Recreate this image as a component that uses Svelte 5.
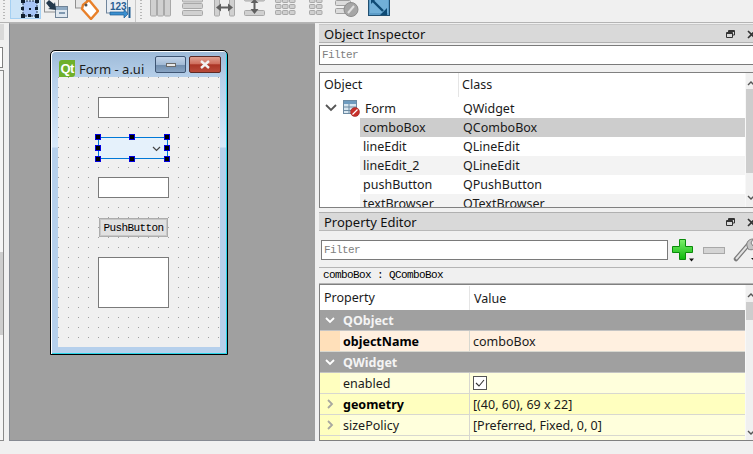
<script>
  const treeRows = [
    { name: 'comboBox', cls: 'QComboBox', kind: 'selected' },
    { name: 'lineEdit', cls: 'QLineEdit', kind: '' },
    { name: 'lineEdit_2', cls: 'QLineEdit', kind: 'alt' },
    { name: 'pushButton', cls: 'QPushButton', kind: '' },
    { name: 'textBrowser', cls: 'QTextBrowser', kind: 'alt' }
  ];
  const handleSpots = ['tl', 'tc', 'tr', 'ml', 'mr', 'bl', 'bc', 'br'];
  const threeCols = [0, 7, 14];
  const gridRows = [0, 6, 12];
</script>

<div class="app">
  <header class="toolbar">
    <span class="grip first"></span>
    <div class="active-tool">
      <svg width="31" height="19" viewBox="0 0 31 19">
        <rect x="13" y="1" width="14" height="15" fill="#a8c6f6" stroke="#26364f" stroke-dasharray="2 1"/>
        <g fill="#10202f">
          <rect x="11" y="-1" width="4" height="4"/><rect x="25" y="-1" width="4" height="4"/>
          <rect x="11" y="7" width="3" height="3"/><rect x="25" y="7" width="3" height="3"/>
          <rect x="11" y="14" width="4" height="4"/><rect x="18" y="14" width="3" height="3"/><rect x="25" y="14" width="4" height="4"/>
          <rect x="19" y="8" width="2" height="2"/>
        </g>
      </svg>
    </div>
    <svg class="tool t2" width="25" height="19" viewBox="0 0 25 19">
      <rect x="0.5" y="-3" width="14" height="15" fill="#efefef" stroke="#8f8f8f"/>
      <rect x="11.5" y="6.5" width="12" height="11" fill="#dfe7ef" stroke="#6f8397"/>
      <rect x="12" y="7" width="11" height="3" fill="#8eaac4"/>
      <rect x="15" y="12" width="6" height="2" fill="#7f98b0"/>
      <path d="M5 0l5 4 1-2 1 8-8-1 2-1-4-5z" fill="#23384c"/>
    </svg>
    <svg class="tool t3" width="24" height="20" viewBox="0 0 24 20">
      <rect x="0.5" y="-3" width="11" height="11" fill="#e6e6e6" stroke="#8f8f8f"/>
      <path d="M8 5l6-5 9 11-7 8L7 9z" fill="#fff" stroke="#e8802a" stroke-width="2.4"/>
      <circle cx="11" cy="5" r="1.5" fill="#555"/>
    </svg>
    <svg class="tool t4" width="25" height="20" viewBox="0 0 25 20">
      <rect x="0.5" y="-3" width="21" height="16" fill="#e8edf3" stroke="#70859c"/>
      <text x="4" y="10" class="num">123</text>
      <path d="M4 12h14v-3l4 5-4 4v-3H4z" fill="#3a8fd0" stroke="#1c5c94" stroke-width="0.7"/>
      <rect x="22.500" y="7" width="2" height="11" fill="#1c5c94"/>
    </svg>
    <span class="sep"></span>
    <span class="grip"></span>
    <svg class="tool t5" width="22" height="17" viewBox="0 0 22 17">
      {#each threeCols as x}
        <rect x={x + 0.5} y="-3" width="6" height="19" rx="1" fill="#d0d0d0" stroke="#a8a8a8"/>
      {/each}
    </svg>
    <svg class="tool t6" width="21" height="17" viewBox="0 0 21 17">
      <rect x="0.5" y="-4" width="20" height="6" rx="1" fill="#d0d0d0" stroke="#a8a8a8"/>
      <rect x="0.5" y="3.5" width="20" height="5" rx="1" fill="#d0d0d0" stroke="#a8a8a8"/>
      <rect x="0.5" y="10.5" width="20" height="5" rx="1" fill="#d0d0d0" stroke="#a8a8a8"/>
    </svg>
    <svg class="tool t7" width="21" height="17" viewBox="0 0 21 17">
      <rect x="0.5" y="-3" width="5" height="19" rx="1" fill="#d0d0d0" stroke="#a8a8a8"/>
      <rect x="15.5" y="-3" width="5" height="19" rx="1" fill="#d0d0d0" stroke="#a8a8a8"/>
      <path d="M2 7.5l5-4v3h7v-3l5 4-5 4v-3H7v3z" fill="#606060"/>
    </svg>
    <svg class="tool t8" width="21" height="17" viewBox="0 0 21 17">
      <rect x="0.5" y="-4" width="20" height="5" rx="1" fill="#d0d0d0" stroke="#a8a8a8"/>
      <rect x="0.5" y="10.5" width="20" height="5" rx="1" fill="#d0d0d0" stroke="#a8a8a8"/>
      <path d="M10.500 -1l4 4h-3v6h3l-4 5-4-5h3V3h-3z" fill="#606060"/>
    </svg>
    <svg class="tool t9" width="21" height="17" viewBox="0 0 21 17">
      {#each gridRows as y}
        {#each threeCols as x}
          <rect x={x + 0.5} y={y - 1.5} width="5.5" height="4" rx="0.7" fill="#d0d0d0" stroke="#a8a8a8"/>
        {/each}
      {/each}
    </svg>
    <svg class="tool t10" width="14" height="17" viewBox="0 0 14 17">
      {#each gridRows as y}
        {#each [0, 7] as x}
          <rect x={x + 0.5} y={y - 1.5} width="5.5" height="4" rx="0.7" fill="#d0d0d0" stroke="#a8a8a8"/>
        {/each}
      {/each}
    </svg>
    <svg class="tool t11" width="24" height="17" viewBox="0 0 24 17">
      <rect x="0.5" y="0.5" width="15" height="5" rx="1" fill="#dcdcdc" stroke="#a0a0a0"/>
      <rect x="0.5" y="8.5" width="15" height="5" rx="1" fill="#dcdcdc" stroke="#a0a0a0"/>
      <circle cx="16" cy="9.5" r="7" fill="#a6a6a6" stroke="#8c8c8c"/>
      <path d="M13 13l6-7" stroke="#e0e0e0" stroke-width="2"/>
    </svg>
    <svg class="tool t12" width="22" height="17" viewBox="0 0 22 17">
      <rect x="0.5" y="-3" width="21" height="18.5" fill="#5c9cc8" stroke="#214f70"/>
      <rect x="2" y="-2" width="18" height="15" fill="#72b0d8"/>
      <path d="M5 1l10 10" stroke="#0e4a74" stroke-width="2.4"/>
      <path d="M3 -2h6l-6 6zM19 15h-7l7-7z" fill="#0e4a74"/>
    </svg>
  </header>

  <div class="main">
    <aside class="leftdock">
      <div class="lhead"></div>
      <div class="lfilter"></div>
      <div class="llist"><div class="lthumb"></div></div>
    </aside>

    <section class="canvas">
      <div class="window">
        <div class="titlebar">
          <div class="qt">Qt</div>
          <div class="wtitle">Form - a.ui</div>
          <div class="wbtn min"><span></span></div>
          <div class="wbtn close">
            <svg width="12" height="9" viewBox="0 0 12 9"><path d="M2 1l8 7M10 1L2 8" stroke="#f2f2f2" stroke-width="2.4"/></svg>
          </div>
        </div>
        <div class="client">
          <div class="lineedit first-edit"></div>
          <div class="combo">
            <svg class="comboarrow" width="9" height="6" viewBox="0 0 9 6"><path d="M1 1l3.5 3.5L8 1" fill="none" stroke="#444" stroke-width="1.2"/></svg>
            {#each handleSpots as s}<i class="handle {s}"></i>{/each}
          </div>
          <div class="lineedit second-edit"></div>
          <div class="pushbutton">PushButton</div>
          <div class="browser"></div>
        </div>
      </div>
    </section>

    <aside class="rightdock">
      <div class="dockhead first-head">
        <span>Object Inspector</span>
        <svg class="float" width="9" height="8" viewBox="0 0 9 8"><path d="M2.500 2V.5h6v4.500H6.500M.5 2.500h6v5h-6zM.5 3.500h6M3 1.500h5" fill="none" stroke="#333"/></svg>
        <svg class="x" width="9" height="9" viewBox="0 0 9 9"><path d="M1 1l7 7M8 1L1 8" stroke="#333" stroke-width="1.6"/></svg>
      </div>
      <div class="filter wide">Filter</div>

      <div class="tree">
        <div class="treebody">
          <div class="thead"><span class="tc1">Object</span><span class="tc2">Class</span></div>
          <div class="troot">
            <svg class="tchev" width="12" height="8" viewBox="0 0 12 8"><path d="M1 1l5 5 5-5" fill="none" stroke="#555" stroke-width="1.8"/></svg>
            <svg class="ticon" width="17" height="17" viewBox="0 0 17 17">
              <rect x="0.5" y="0.5" width="13" height="13" fill="#d8e6f0" stroke="#6d8ba3"/>
              <rect x="1" y="1" width="12" height="3" fill="#6f9cc0"/>
              <path d="M1 7h12M1 10.5h12M6 4v9" stroke="#6d8ba3"/>
              <circle cx="12" cy="12" r="4.5" fill="#c8302a" stroke="#8c1d1a" stroke-width="0.5"/>
              <path d="M9.5 14.5l5-5" stroke="#fff" stroke-width="1.2"/>
            </svg>
            <span class="formname">Form</span>
            <span class="rootcls">QWidget</span>
          </div>
          {#each treeRows as r}
            <div class="trow {r.kind}"><span class="rn">{r.name}</span><span class="rc">{r.cls}</span></div>
          {/each}
        </div>
        <div class="scroll s1">
          <svg class="up" width="8" height="6" viewBox="0 0 8 6"><path d="M1 5l3-3 3 3" fill="none" stroke="#555" stroke-width="1.4"/></svg>
          <div class="thumb t-a"></div>
          <svg class="down" width="8" height="6" viewBox="0 0 8 6"><path d="M1 1l3 3 3-3" fill="none" stroke="#555" stroke-width="1.4"/></svg>
        </div>
      </div>

      <div class="dockhead second-head">
        <span>Property Editor</span>
        <svg class="float" width="9" height="8" viewBox="0 0 9 8"><path d="M2.500 2V.5h6v4.500H6.500M.5 2.500h6v5h-6zM.5 3.500h6M3 1.500h5" fill="none" stroke="#333"/></svg>
        <svg class="x" width="9" height="9" viewBox="0 0 9 9"><path d="M1 1l7 7M8 1L1 8" stroke="#333" stroke-width="1.6"/></svg>
      </div>

      <div class="peditbar">
        <div class="filter short">Filter</div>
        <svg class="plus" width="24" height="24" viewBox="0 0 24 24">
          <defs>
            <linearGradient id="pg" x1="0" y1="0" x2="0" y2="1"><stop offset="0" stop-color="#7df06a"/><stop offset="1" stop-color="#0cb80c"/></linearGradient>
          </defs>
          <path d="M8.500 1.500h6v7h7v6h-7v7h-6v-7h-7v-6h7z" fill="url(#pg)" stroke="#0a8a0a"/>
          <path d="M18 20.500h5l-2.500 3z" fill="#111"/>
        </svg>
        <svg class="minus" width="22" height="7" viewBox="0 0 22 7"><rect x="0.5" y="0.500" width="21" height="6" fill="#d4d4d4" stroke="#a8a8a8"/></svg>
        <svg class="wrench" width="21" height="24" viewBox="0 0 21 24">
          <path d="M3 21L15 7" stroke="#7a7a7a" stroke-width="4.500" stroke-linecap="round"/>
          <path d="M3 21L15 7" stroke="#e2e2e2" stroke-width="2"/>
          <path d="M14 8c-1-4 2-7 6-7l-2 4 2 3 3-1c0 4-4 6-8 4z" fill="#c4c4c4" stroke="#808080"/>
          <path d="M18 20h3v2h-1z" fill="#111"/>
        </svg>
      </div>

      <div class="classlabel">comboBox : QComboBox</div>

      <div class="ptable">
        <div class="pbody">
          <div class="phead"><span class="pc1">Property</span><span class="pc2">Value</span></div>

          <div class="group">
            <svg width="10" height="7" viewBox="0 0 10 7"><path d="M1 1l4 4 4-4" fill="none" stroke="#fff" stroke-width="1.800"/></svg>
            <span>QObject</span>
          </div>
          <div class="prow orange">
            <span class="stripe"></span><b class="pname">objectName</b><span class="pval">comboBox</span>
          </div>
          <div class="group">
            <svg width="10" height="7" viewBox="0 0 10 7"><path d="M1 1l4 4 4-4" fill="none" stroke="#fff" stroke-width="1.800"/></svg>
            <span>QWidget</span>
          </div>
          <div class="prow yellow">
            <span class="stripe"></span><span class="pname">enabled</span>
            <span class="pval"><svg class="check" width="14" height="14" viewBox="0 0 14 14"><rect x="0.500" y="0.500" width="13" height="13" fill="#fff" stroke="#555"/><path d="M3 7l3 3 5-6" fill="none" stroke="#333" stroke-width="1.100"/></svg></span>
          </div>
          <div class="prow deep">
            <span class="stripe"><svg width="7" height="10" viewBox="0 0 7 10"><path d="M1 1l4 4-4 4" fill="none" stroke="#a8a8a0" stroke-width="1.800"/></svg></span><b class="pname">geometry</b><span class="pval">[(40, 60), 69 x 22]</span>
          </div>
          <div class="prow yellow">
            <span class="stripe"><svg width="7" height="10" viewBox="0 0 7 10"><path d="M1 1l4 4-4 4" fill="none" stroke="#a8a8a0" stroke-width="1.800"/></svg></span><span class="pname">sizePolicy</span><span class="pval">[Preferred, Fixed, 0, 0]</span>
          </div>
          <div class="prow yellow tail"><span class="stripe"></span><span class="pname"></span><span class="pval"></span></div>
        </div>
        <div class="scroll s2">
          <svg class="up" width="8" height="6" viewBox="0 0 8 6"><path d="M1 5l3-3 3 3" fill="none" stroke="#555" stroke-width="1.4"/></svg>
          <div class="thumb t-b"></div>
          <svg class="down" width="8" height="6" viewBox="0 0 8 6"><path d="M1 1l3 3 3-3" fill="none" stroke="#555" stroke-width="1.4"/></svg>
        </div>
      </div>
    </aside>
  </div>
</div>

<style>
  :global(body) { margin: 0; background: #f0f0f0; }
  .app {
    width: 753px; height: 454px; overflow: hidden; background: #f0f0f0;
    font-family: "Noto Sans", "Open Sans", sans-serif; font-size: 12.500px; color: #1a1a1a;
  }
  /* toolbar */
  .toolbar {
    height: 22px; display: flex; align-items: flex-start; position: relative;
    border-bottom: 1px solid #b4b4b4; box-sizing: content-box; overflow: hidden;
  }
  .toolbar svg { display: block; flex: none; overflow: hidden; }
  .grip {
    width: 2px; height: 20px; flex: none; margin-left: 3px;
    background-image: repeating-linear-gradient(#b8b8b8 0 1px, transparent 1px 3px);
  }
  .grip.first { margin-right: 5px; }
  .active-tool {
    width: 31px; height: 19px; box-sizing: border-box; flex: none;
    background: #cce4f7; border: 1px solid #a5d0f2; border-top: 0;
    overflow: hidden;
  }
  .active-tool svg { margin: 0 0 0 -1px; }
  .t2 { margin-left: 3px; }
  .t3 { margin-left: 6px; }
  .t4 { margin-left: 7px; }
  .sep { width: 1px; height: 22px; background: #c8c8c8; margin-left: 4px; flex: none; }
  .grip:not(.first) { margin-left: 4px; }
  .t5 { margin-left: 8px; }
  .t6 { margin-left: 10px; }
  .t7 { margin-left: 11px; }
  .t8 { margin-left: 9px; }
  .t9 { margin-left: 10px; }
  .t10 { margin-left: 13px; }
  .t11 { margin-left: 12px; }
  .t12 { margin-left: 9px; }
  .tool text.num { font: bold 10px "Liberation Sans", sans-serif; fill: #2b5f93; }

  .main { display: flex; height: 418px; }
  /* left dock */
  .leftdock { width: 9px; flex: none; padding-top: 1px; box-sizing: border-box; }
  .lhead { height: 16px; width: 4px; background: #d9d9d9; }
  .lfilter { margin-top: 7px; height: 19px; width: 2px; background: #fff; border: 1px solid #808080; border-left: 0; }
  .llist {
    margin-top: 2px; height: 371px; width: 4px; background: #f5f5f5;
    border: 1px solid #8a8a8a; border-left: 0; padding-top: 181px; box-sizing: border-box;
  }
  .lthumb { height: 83px; background: #cdcdcd; width: 3px; }

  /* canvas */
  .canvas {
    width: 306px; height: 418px; flex: none; box-sizing: border-box;
    background: #a0a0a0; border-left: 1px solid #868a92; border-bottom: 1px solid #868a92;
    padding: 26px 0 0 40px; border-top: 1px solid #b0b0b0;
  }
  .window {
    width: 178px; height: 305px; box-sizing: border-box;
    border: 1px solid #000; border-radius: 5px 5px 0 0;
    box-shadow: inset 1px 1px 0 #fff, inset -1px -1px 0 #28d4e8;
    background: linear-gradient(#9dbad8 0, #b6cfe9 26px, #d8e9fa 96px, #b6d0ec 97px);
    padding: 0 7px 7px;
  }
  .titlebar { height: 26px; display: flex; align-items: flex-start; }
  .qt {
    width: 16px; height: 17px; margin-top: 9px; background: #6fb02b; color: #fff;
    font: bold 13px/17px "Liberation Sans", sans-serif; text-align: center; letter-spacing: -0.800px;
    flex: none; margin-left: 1px; box-sizing: border-box; border-radius: 3px 0 3px 0; white-space: nowrap;
  }
  .wtitle { margin: 7px 0 0 4px; font-size: 13px; line-height: 22px; color: #1d1d1d; width: 76px; flex: none; }
  .wbtn {
    width: 31px; height: 17px; margin-top: 5px; box-sizing: border-box; flex: none;
    border: 1px solid #3f5674; border-radius: 2px;
    display: flex; align-items: center; justify-content: center;
  }
  .min { background: linear-gradient(#c3d5ea 0, #a3bbd6 50%, #6f8cad 51%, #89a5c4 100%); }
  .min span { width: 10px; height: 4px; background: #e8e8e8; border: 1px solid #6a6a6a; box-sizing: border-box; margin-top: 1px; }
  .close { margin-left: 3px; width: 32px; border-color: #5e2a25; background: linear-gradient(#e0a090 0, #cf6f5e 45%, #ab3525 52%, #b84a3a 100%); }
  .close svg { display: block; }
  .client {
    width: 162px; height: 270px; box-sizing: border-box; padding: 20px 0 0 40px;
    background: conic-gradient(at 1px 1px, transparent 75%, #a0a0a0 0) 0 0 / 10px 10px, #f0f0f0;
  }
  .lineedit, .browser { width: 71px; box-sizing: border-box; background: #fff; border: 1px solid #7a7a7a; }
  .lineedit { height: 21px; }
  .combo {
    width: 70px; height: 22px; margin-top: 19px; box-sizing: border-box; position: relative;
    background: #e5f1fb; border: 1px solid #0078d7;
  }
  .comboarrow { position: absolute; right: 6px; top: 8px; display: block; }
  .second-edit { margin-top: 18px; }
  .pushbutton {
    width: 69px; height: 19px; margin: 20px 0 0 1px; box-sizing: border-box;
    background: #e1e1e1; border: 1px solid #adadad; box-shadow: inset 0 0 0 1px #c8c8c8;
    font: 11px/18px "Liberation Mono", monospace; letter-spacing: -0.600px; text-align: center; color: #000;
  }
  .browser { height: 51px; margin-top: 20px; }
  .handle {
    position: absolute; width: 6px; height: 6px; box-sizing: border-box;
    background: #000; border: 1px solid #0000e0; display: block;
  }
  .tl, .ml, .bl { left: -4px; }
  .tc, .bc { left: 30px; }
  .tr, .mr, .br { right: -3px; }
  .tl, .tc, .tr { top: -4px; }
  .ml, .mr { top: 7px; }
  .bl, .bc, .br { bottom: -4px; }

  /* right dock */
  .rightdock { margin-left: 4px; width: 434px; flex: none; overflow: hidden; height: 418px; }
  .dockhead {
    height: 19px; background: #d9d9d9; display: flex; align-items: center; padding-left: 5px;
    font-size: 13px; box-sizing: border-box; color: #111; position: relative;
  }
  .first-head { margin-top: 1px; border-bottom: 1px solid #b0b0b0; border-top: 1px solid #c8c8c8; }
  .second-head { margin-top: 4px; border-top: 1px solid #b0b0b0; border-bottom: 1px solid #b8b8b8; }
  .float { position: absolute; left: 407px; top: 5px; }
  .x { position: absolute; left: 428px; top: 5px; }
  .filter {
    box-sizing: border-box; background: #fff; height: 20px;
    border: 1px solid #7a7a7a; font: 11px/19px "Liberation Mono", monospace; letter-spacing: -0.600px; color: #808080; padding-left: 2px;
  }
  .wide { margin-top: 2px; width: 440px; }
  .short { width: 347px; flex: none; height: 20px; }

  .tree {
    margin-top: 7px; height: 136px; box-sizing: border-box; display: flex;
    border: 1px solid #808080; border-right: 0; background: #fff;
  }
  .treebody { width: 425px; flex: none; overflow: hidden; }
  .thead { height: 25px; position: relative; display: flex; align-items: flex-start; }
  .tc1 { width: 139px; padding-left: 4px; box-sizing: border-box; border-right: 1px solid #e5e5e5; line-height: 24px; }
  .tc2 { padding-left: 3px; line-height: 24px; }
  .troot { height: 20px; display: flex; align-items: center; }
  .tchev { margin-left: 5px; flex: none; }
  .ticon { margin-left: 6px; flex: none; display: block; }
  .formname { margin-left: 5px; width: 98px; flex: none; }
  .trow { height: 19px; margin-left: 40px; display: flex; align-items: center; flex: none; }
  .rn { width: 103px; padding-left: 3px; box-sizing: border-box; flex: none; }
  .selected { background: #cdcdcd; }
  .alt { background: #f3f3f3; }

  .scroll { width: 8px; flex: none; background: #f0f0f0; position: relative; border-left: 1px solid #f8f8f8; }
  .scroll svg { position: absolute; left: 1px; display: block; }
  .s1 .up { top: 7px; }
  .s1 .down { top: 122px; }
  .s2 .up { top: 7px; }
  .s2 .down { top: 145px; }
  .thumb { position: absolute; left: 0; width: 8px; background: #cdcdcd; }
  .t-a { top: 16px; height: 84px; }
  .t-b { top: 17px; height: 18px; }

  .peditbar { display: flex; align-items: center; height: 26px; margin-top: 6px; padding-left: 2px; }
  .plus { margin-left: 3px; flex: none; display: block; }
  .minus { margin-left: 8px; flex: none; display: block; }
  .wrench { margin-left: 8px; flex: none; display: block; }

  .classlabel {
    margin-top: 4px; height: 17px; box-sizing: border-box; padding-left: 4px;
    border-top: 1px solid #b4b4b4; border-bottom: 1px solid #b4b4b4;
    font: 11px/15px "Liberation Mono", monospace; letter-spacing: -0.600px; color: #000;
  }
  .ptable {
    height: 157px; box-sizing: border-box; display: flex; overflow: hidden;
    border: 1px solid #808080; border-right: 0; background: #fff;
  }
  .pbody { width: 425px; flex: none; overflow: hidden; }
  .phead { height: 25px; display: flex; align-items: center; padding-top: 1px; box-sizing: border-box; }
  .pc1 { width: 150px; padding-left: 4px; box-sizing: border-box; border-right: 1px solid #e5e5e5; line-height: 24px; flex: none; }
  .pc2 { padding-left: 4px; }
  .group {
    height: 21px; background: #a0a0a0; color: #f4f4f4; font-weight: 700; display: flex; align-items: center;
    box-sizing: border-box; border-bottom: 1px solid #c4c4c4;
  }
  .group svg { margin-left: 5px; flex: none; }
  .group span { margin-left: 8px; }
  .prow { height: 21px; display: flex; align-items: stretch; box-sizing: border-box; border-bottom: 1px solid #d8d8d0; }
  .stripe { width: 20px; flex: none; display: flex; align-items: center; padding-left: 7px; box-sizing: border-box; }
  .pname { width: 130px; flex: none; padding-left: 3px; box-sizing: border-box; line-height: 21px; border-right: 1px solid #d8d8d0; }
  b.pname { font-weight: 700; color: #000; }
  .pval { padding-left: 3px; line-height: 21px; display: flex; align-items: center; }
  .check { display: block; }
  .orange { background: #fff0e0; }
  .orange .stripe { background: #ffe0ba; }
  .yellow { background: #ffffdc; }
  .yellow .stripe { background: #ffffbf; }
  .deep { background: #ffffbf; }
  .deep .stripe { background: #ffffbf; }
</style>
